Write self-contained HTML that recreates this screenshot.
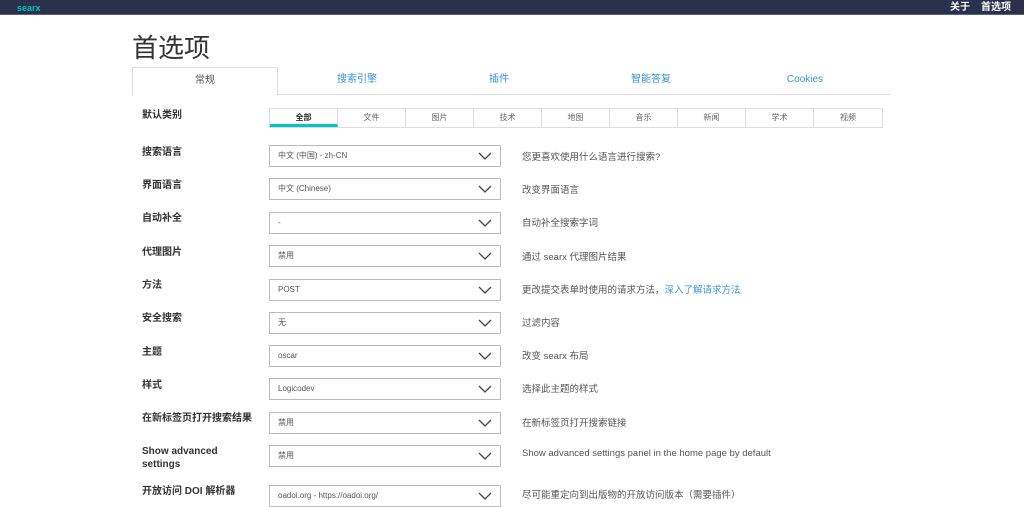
<!DOCTYPE html>
<html><head><meta charset="utf-8"><style>
*{margin:0;padding:0;box-sizing:border-box}
body{width:1024px;height:502px;overflow:hidden;background:#fff;font-family:"Liberation Sans","Noto Sans CJK SC",sans-serif;color:#333;position:relative}
.nav{position:absolute;left:0;top:0;width:1024px;height:15px;background:#29314d;border-bottom:1px solid #5a6080}
.logo{position:absolute;left:17px;top:1px;line-height:14px;font-size:9px;font-weight:bold;color:#00c5c5}
.nr{position:absolute;top:1px;line-height:14px;font-size:10px;color:#fff;font-weight:bold}
h1{position:absolute;left:132px;top:31px;font-size:26px;font-weight:normal;color:#333;line-height:34px}
.tabs{position:absolute;left:132px;top:67px;width:758px;height:28px;border-bottom:1px solid #ddd}
.tab{position:absolute;top:0;height:28px;width:146px;text-align:center;line-height:26px;font-size:10px;color:#3a95d0}
.tab.a{border:1px solid #ddd;border-bottom:1px solid #fff;color:#555;background:#fff;height:29px}
.cats{position:absolute;left:269px;top:108px;height:20px;display:flex;border:1px solid #ddd}
.cat{width:68px;text-align:center;font-size:8px;line-height:18px;color:#666;border-right:1px solid #ddd}
.cat:last-child{border-right:none}
.cat.a{color:#333;font-weight:bold;border-bottom:3px solid #00c5c5}
.lbl{position:absolute;left:142px;font-size:10px;font-weight:bold;color:#333;line-height:13px}
.sel{position:absolute;left:269px;width:232px;height:22px;border:1px solid #bbb;font-size:8px;color:#555;line-height:20px;padding-left:8px}
.sel svg{position:absolute;right:8px;top:6px}
.d{position:absolute;left:522px;font-size:9.5px;color:#555}
.d a{color:#3a95d0;text-decoration:none}
</style></head><body>
<div class="nav"><span class="logo">searx</span><span class="nr" style="left:950px">关于</span><span class="nr" style="left:981px">首选项</span></div>
<h1>首选项</h1>
<div class="tabs">
<div class="tab a" style="left:0">常规</div>
<div class="tab" style="left:152px">搜索引擎</div>
<div class="tab" style="left:294px">插件</div>
<div class="tab" style="left:446px">智能答复</div>
<div class="tab" style="left:600px">Cookies</div>
</div>
<div class="lbl" style="top:109px">默认类别</div>
<div class="cats"><div class="cat a">全部</div><div class="cat">文件</div><div class="cat">图片</div><div class="cat">技术</div><div class="cat">地图</div><div class="cat">音乐</div><div class="cat">新闻</div><div class="cat">学术</div><div class="cat">视频</div></div>

<div class="lbl" style="top:146px">搜索语言</div>
<div class="sel" style="top:145px">中文 (中国) - zh-CN<svg width="14" height="9"><path d="M1 1L7 7L13 1" stroke="#444" fill="none" stroke-width="1.3"/></svg></div>
<div class="d" style="top:149px">您更喜欢使用什么语言进行搜索?</div>

<div class="lbl" style="top:179px">界面语言</div>
<div class="sel" style="top:178px">中文 (Chinese)<svg width="14" height="9"><path d="M1 1L7 7L13 1" stroke="#444" fill="none" stroke-width="1.3"/></svg></div>
<div class="d" style="top:182px">改变界面语言</div>

<div class="lbl" style="top:212px">自动补全</div>
<div class="sel" style="top:212px">-<svg width="14" height="9"><path d="M1 1L7 7L13 1" stroke="#444" fill="none" stroke-width="1.3"/></svg></div>
<div class="d" style="top:215px">自动补全搜索字词</div>

<div class="lbl" style="top:246px">代理图片</div>
<div class="sel" style="top:245px">禁用<svg width="14" height="9"><path d="M1 1L7 7L13 1" stroke="#444" fill="none" stroke-width="1.3"/></svg></div>
<div class="d" style="top:249px">通过 searx 代理图片结果</div>

<div class="lbl" style="top:279px">方法</div>
<div class="sel" style="top:279px">POST<svg width="14" height="9"><path d="M1 1L7 7L13 1" stroke="#444" fill="none" stroke-width="1.3"/></svg></div>
<div class="d" style="top:282px">更改提交表单时使用的请求方法，<a>深入了解请求方法</a></div>

<div class="lbl" style="top:312px">安全搜索</div>
<div class="sel" style="top:312px">无<svg width="14" height="9"><path d="M1 1L7 7L13 1" stroke="#444" fill="none" stroke-width="1.3"/></svg></div>
<div class="d" style="top:315px">过滤内容</div>

<div class="lbl" style="top:346px">主题</div>
<div class="sel" style="top:345px">oscar<svg width="14" height="9"><path d="M1 1L7 7L13 1" stroke="#444" fill="none" stroke-width="1.3"/></svg></div>
<div class="d" style="top:348px">改变 searx 布局</div>

<div class="lbl" style="top:379px">样式</div>
<div class="sel" style="top:378px">Logicodev<svg width="14" height="9"><path d="M1 1L7 7L13 1" stroke="#444" fill="none" stroke-width="1.3"/></svg></div>
<div class="d" style="top:381px">选择此主题的样式</div>

<div class="lbl" style="top:412px">在新标签页打开搜索结果</div>
<div class="sel" style="top:412px">禁用<svg width="14" height="9"><path d="M1 1L7 7L13 1" stroke="#444" fill="none" stroke-width="1.3"/></svg></div>
<div class="d" style="top:415px">在新标签页打开搜索链接</div>

<div class="lbl" style="top:445px">Show advanced<br>settings</div>
<div class="sel" style="top:445px">禁用<svg width="14" height="9"><path d="M1 1L7 7L13 1" stroke="#444" fill="none" stroke-width="1.3"/></svg></div>
<div class="d" style="top:448px">Show advanced settings panel in the home page by default</div>

<div class="lbl" style="top:485px">开放访问 DOI 解析器</div>
<div class="sel" style="top:485px">oadoi.org - https://oadoi.org/<svg width="14" height="9"><path d="M1 1L7 7L13 1" stroke="#444" fill="none" stroke-width="1.3"/></svg></div>
<div class="d" style="top:487px">尽可能重定向到出版物的开放访问版本（需要插件）</div>
</body></html>
